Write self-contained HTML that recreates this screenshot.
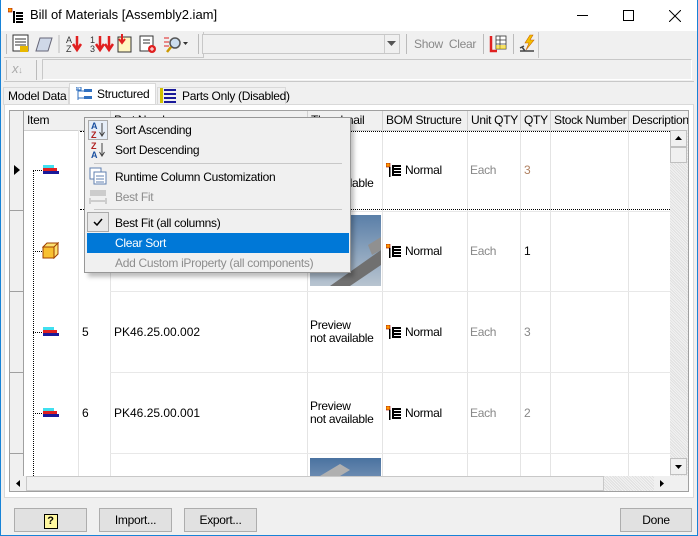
<!DOCTYPE html>
<html><head><meta charset="utf-8"><style>
*{box-sizing:border-box;margin:0;padding:0}
body{width:698px;height:536px;background:#f0f0f0;font-family:"Liberation Sans",sans-serif;font-size:12px;letter-spacing:-0.3px;color:#000;position:relative;overflow:hidden}
.a{position:absolute}
.win{left:0;top:0;width:698px;height:536px;border:1px solid #1883d7;border-top:none}
.t{white-space:nowrap}
.vl{position:absolute;top:130px;width:1px;height:346px;background:#e4e4e4}
.hl{position:absolute;left:110px;width:560px;height:1px;background:#e8e8e8}
.btn{position:absolute;top:508px;height:24px;background:#e1e1e1;border:1px solid #adadad;text-align:center;line-height:22px}
.mi{position:absolute;left:115px;white-space:nowrap}
.hd{position:absolute;top:111px;height:19px;border-right:1px solid #d0d0d0;padding-left:3px;line-height:19px;white-space:nowrap;overflow:hidden;background:#f0f0f0}
.bom{position:absolute;left:386px;width:16px;height:14px}
</style></head><body>
<div class="a" style="left:0;top:0;width:698px;height:31px;background:#fff"></div>
<div class="a win"></div>
<svg class="a" style="left:8px;top:8px" width="16" height="16"><rect x="0" y="0" width="4" height="4" fill="#f90" stroke="#900" stroke-width=".6"/><rect x="5" y="3" width="2" height="12" fill="#000"/><g fill="#000"><rect x="8" y="4" width="7" height="2"/><rect x="8" y="7" width="7" height="2"/><rect x="8" y="10" width="7" height="2"/><rect x="8" y="13" width="7" height="2"/></g></svg>
<div class="a t" style="left:30px;top:7px;font-size:13px;letter-spacing:0">Bill of Materials [Assembly2.iam]</div>
<div class="a" style="left:577px;top:15px;width:11px;height:1px;background:#000"></div>
<div class="a" style="left:623px;top:10px;width:11px;height:11px;border:1px solid #000"></div>
<svg class="a" style="left:669px;top:10px" width="12" height="12"><path d="M0 0L12 12M12 0L0 12" stroke="#000" stroke-width="1"/></svg>
<div class="a" style="left:4px;top:32px;width:200px;height:26px;border:1px solid #c8c8c8;border-top:none;border-left:none"></div>
<div class="a" style="left:6px;top:34px;width:1px;height:20px;background:#bbb"></div>
<svg class="a" style="left:12px;top:34px" width="180" height="20">
<rect x="1" y="1" width="15" height="16" fill="#fff" stroke="#333"/><path d="M3 5h11M3 8h11M3 11h11" stroke="#333"/><rect x="8" y="12" width="8" height="6" fill="#e8b800"/>
<path d="M28 4h12l-4 13H24z" fill="#cfd8e8" stroke="#667"/>
<line x1="47" y1="1" x2="47" y2="19" stroke="#bbb"/>
<text x="54" y="9" font-size="9" fill="#333" font-family="Liberation Sans">A</text><text x="54" y="18" font-size="9" fill="#333" font-family="Liberation Sans">Z</text><path d="M65 2v12M61 10l4 6 4-6" stroke="#e02020" stroke-width="2.5" fill="none"/>
<text x="78" y="9" font-size="9" fill="#333" font-family="Liberation Sans">1</text><text x="78" y="18" font-size="9" fill="#333" font-family="Liberation Sans">3</text><path d="M88 2v12M84 10l4 6 4-6M97 2v12M93 10l4 6 4-6" stroke="#e02020" stroke-width="2.5" fill="none"/>
<rect x="106" y="3" width="13" height="15" fill="#fff5c0" stroke="#333"/><path d="M110 0v8M107 5l3 4 3-4" stroke="#e02020" stroke-width="2" fill="none"/>
<rect x="128" y="2" width="13" height="15" fill="#fff" stroke="#333"/><path d="M131 6h7M131 9h7" stroke="#333"/><circle cx="140" cy="15" r="4" fill="#e02020"/><path d="M138 15h4M140 13v4" stroke="#fff"/>
<path d="M152 4h5M152 8h5M152 12h5" stroke="#e02020"/><circle cx="163" cy="9" r="5" fill="#cde" stroke="#555" stroke-width="1.5"/><path d="M159 13l-4 5" stroke="#c90" stroke-width="2.5"/><path d="M171 8h5l-2.5 3z" fill="#333"/>
</svg>
<div class="a" style="left:198px;top:34px;width:1px;height:20px;background:#bbb"></div>
<div class="a" style="left:202px;top:34px;width:198px;height:20px;background:#f0f0f0;border:1px solid #c8c8c8"></div>
<div class="a" style="left:384px;top:35px;width:15px;height:18px;border-left:1px solid #ccc"></div>
<svg class="a" style="left:387px;top:41px" width="9" height="5"><path d="M0 0h9L4.5 5z" fill="#555"/></svg>
<div class="a" style="left:406px;top:34px;width:1px;height:20px;background:#bbb"></div>
<div class="a t" style="left:414px;top:37px;color:#888;font-size:12px">Show&nbsp; Clear</div>
<div class="a" style="left:483px;top:34px;width:1px;height:20px;background:#bbb"></div>
<svg class="a" style="left:489px;top:35px" width="18" height="18"><path d="M2 1v15h6" stroke="#e02020" stroke-width="2.5" fill="none"/><rect x="7" y="1" width="10" height="13" fill="#fff" stroke="#333" stroke-width=".8"/><path d="M7 5h10M7 9h10M11 1v13" stroke="#333" stroke-width=".8"/><rect x="7" y="10" width="10" height="4" fill="#f4d000" opacity=".6"/></svg>
<div class="a" style="left:513px;top:34px;width:1px;height:20px;background:#bbb"></div>
<svg class="a" style="left:518px;top:34px" width="20" height="20"><path d="M12 1l-5 8h4l-3 7 8-10h-4l3-5z" fill="#f4c000" stroke="#c60" stroke-width=".6"/><path d="M2 17h14M4 13l3 4M2 14l4-2" stroke="#444" stroke-width="1.5"/></svg>
<div class="a" style="left:538px;top:32px;width:1px;height:26px;background:#c8c8c8"></div>
<div class="a" style="left:4px;top:58px;width:690px;height:24px;border-bottom:1px solid #c8c8c8"></div>
<div class="a" style="left:6px;top:60px;width:1px;height:20px;background:#bbb"></div>
<div class="a t" style="left:12px;top:61px;color:#aaa;font-style:italic;font-size:13px">x<span style="font-size:9px">↓</span></div>
<div class="a" style="left:36px;top:60px;width:1px;height:20px;background:#bbb"></div>
<div class="a" style="left:42px;top:59px;width:650px;height:21px;border:1px solid #c8c8c8;border-right-color:#fff;border-bottom-color:#fff"></div>
<div class="a t" style="left:3px;top:87px;height:18px;width:66px;border:1px solid #d9d9d9;border-bottom:none;padding-left:4px;line-height:17px">Model Data</div>
<div class="a t" style="left:69px;top:83px;height:23px;width:87px;background:#fff;border:1px solid #d9d9d9;border-bottom:none;padding-left:27px;line-height:20px">Structured</div>
<svg class="a" style="left:76px;top:87px" width="18" height="14"><path d="M2 1v12M2 4h6M2 11h6" stroke="#3070c0"/><rect x="0" y="0" width="5" height="3" fill="none" stroke="#3070c0"/><rect x="8" y="2" width="8" height="3" fill="#3070c0"/><rect x="8" y="9" width="8" height="3" fill="#3070c0"/></svg>
<div class="a t" style="left:157px;top:87px;height:18px;width:129px;border:1px solid #d9d9d9;border-bottom:none;padding-left:24px;line-height:17px">Parts Only (Disabled)</div>
<svg class="a" style="left:160px;top:88px" width="16" height="15"><rect x="0" y="0" width="3" height="15" fill="#d0c000"/><g fill="#1a1a9a"><rect x="4" y="1" width="12" height="2"/><rect x="4" y="5" width="12" height="2"/><rect x="4" y="9" width="12" height="2"/><rect x="4" y="13" width="12" height="2"/></g></svg>
<div class="a" style="left:4px;top:104px;width:690px;height:394px;border:1px solid #d9d9d9;background:#fff"></div>
<div class="a" style="left:9px;top:110px;width:680px;height:382px;background:#fff;border:1px solid #a0a0a0"></div>
<div class="a" style="left:10px;top:111px;width:14px;height:365px;background:#f0f0f0;border-right:1px solid #a0a0a0"></div>
<div class="a" style="left:10px;top:210px;width:14px;height:1px;background:#a0a0a0"></div>
<div class="a" style="left:10px;top:291px;width:14px;height:1px;background:#a0a0a0"></div>
<div class="a" style="left:10px;top:372px;width:14px;height:1px;background:#a0a0a0"></div>
<div class="a" style="left:10px;top:453px;width:14px;height:1px;background:#a0a0a0"></div>
<svg class="a" style="left:14px;top:165px" width="6" height="10"><path d="M0 0l6 5-6 5z" fill="#000"/></svg>
<div class="hd" style="left:24px;width:87px">Item</div>
<div class="hd" style="left:111px;width:197px">Part Number</div>
<div class="hd" style="left:308px;width:75px">Thumbnail</div>
<div class="hd" style="left:383px;width:85px">BOM Structure</div>
<div class="hd" style="left:468px;width:53px">Unit QTY</div>
<div class="hd" style="left:521px;width:30px">QTY</div>
<div class="hd" style="left:551px;width:78px">Stock Number</div>
<div class="hd" style="left:629px;width:59px;border-right:none">Description</div>
<div class="a" style="left:24px;top:130px;width:646px;height:1px;background:#d0d0d0"></div>
<div class="vl" style="left:78px"></div><div class="vl" style="left:110px"></div><div class="vl" style="left:307px"></div><div class="vl" style="left:382px"></div><div class="vl" style="left:467px"></div><div class="vl" style="left:520px"></div><div class="vl" style="left:550px"></div><div class="vl" style="left:628px"></div>
<div class="hl" style="top:291px"></div><div class="hl" style="top:372px"></div><div class="hl" style="top:453px"></div><div class="hl" style="top:211px"></div>
<div class="a" style="left:80px;top:131px;width:590px;height:0;border-top:1px dotted #000"></div>
<div class="a" style="left:80px;top:209px;width:590px;height:0;border-top:1px dotted #000"></div>
<div class="a" style="left:33px;top:170px;width:0;height:306px;border-left:1px dotted #000"></div>
<div class="a" style="left:33px;top:170px;width:9px;border-top:1px dotted #000"></div>
<div class="a" style="left:33px;top:251px;width:9px;border-top:1px dotted #000"></div>
<div class="a" style="left:33px;top:332px;width:9px;border-top:1px dotted #000"></div>
<div class="a" style="left:33px;top:413px;width:9px;border-top:1px dotted #000"></div>
<svg class="a" style="left:43px;top:165px" width="16" height="10"><rect x="0" y="0" width="11" height="3" fill="#40e0f0"/><rect x="0" y="3" width="14" height="3" fill="#e02020"/><rect x="0" y="6" width="16" height="3" fill="#1a1a9a"/></svg>
<svg class="a" style="left:43px;top:327px" width="16" height="10"><rect x="0" y="0" width="11" height="3" fill="#40e0f0"/><rect x="0" y="3" width="14" height="3" fill="#e02020"/><rect x="0" y="6" width="16" height="3" fill="#1a1a9a"/></svg>
<svg class="a" style="left:43px;top:408px" width="16" height="10"><rect x="0" y="0" width="11" height="3" fill="#40e0f0"/><rect x="0" y="3" width="14" height="3" fill="#e02020"/><rect x="0" y="6" width="16" height="3" fill="#1a1a9a"/></svg>
<svg class="a" style="left:42px;top:242px" width="17" height="17"><path d="M1 5h11v11H1z" fill="#f8c030" stroke="#a04000"/><path d="M1 5l4-4h11l-4 4zM12 5l4-4v11l-4 4z" fill="#fde070" stroke="#a04000"/></svg>
<div class="a t" style="left:82px;top:325px">5</div>
<div class="a t" style="left:114px;top:325px;letter-spacing:0">PK46.25.00.002</div>
<div class="a t" style="left:82px;top:406px">6</div>
<div class="a t" style="left:114px;top:406px;letter-spacing:0">PK46.25.00.001</div>
<div class="a t" style="left:310px;top:164px;line-height:13px">Preview<br>not available</div>
<div class="a t" style="left:310px;top:319px;line-height:13px">Preview<br>not available</div>
<div class="a t" style="left:310px;top:400px;line-height:13px">Preview<br>not available</div>
<div class="a" style="left:310px;top:215px;width:71px;height:71px;background:linear-gradient(180deg,#5a7fa8,#b8c4d0)"></div>
<svg class="a" style="left:310px;top:215px" width="71" height="71"><path d="M20 71L71 35V50L40 71z" fill="#707070"/><path d="M58 30L71 22V35L62 40z" fill="#909090"/></svg>
<div class="a" style="left:310px;top:458px;width:71px;height:18px;background:linear-gradient(180deg,#4a72a0,#6a8ab0)"></div>
<svg class="a" style="left:310px;top:458px" width="71" height="18"><path d="M10 18L30 6l10 6-10 6z" fill="#b0b0b0"/></svg>
<svg class="bom" style="top:163px" viewBox="0 0 16 14"><rect x="0" y="0" width="4" height="4" fill="#f90" stroke="#900" stroke-width=".6"/><rect x="3" y="4" width="1.5" height="10"/><rect x="6" y="2" width="9" height="2"/><rect x="6" y="5" width="9" height="2"/><rect x="6" y="8" width="9" height="2"/><rect x="6" y="11" width="9" height="2"/><rect x="6" y="2" width="2" height="11"/></svg>
<svg class="bom" style="top:244px" viewBox="0 0 16 14"><rect x="0" y="0" width="4" height="4" fill="#f90" stroke="#900" stroke-width=".6"/><rect x="3" y="4" width="1.5" height="10"/><rect x="6" y="2" width="9" height="2"/><rect x="6" y="5" width="9" height="2"/><rect x="6" y="8" width="9" height="2"/><rect x="6" y="11" width="9" height="2"/><rect x="6" y="2" width="2" height="11"/></svg>
<svg class="bom" style="top:325px" viewBox="0 0 16 14"><rect x="0" y="0" width="4" height="4" fill="#f90" stroke="#900" stroke-width=".6"/><rect x="3" y="4" width="1.5" height="10"/><rect x="6" y="2" width="9" height="2"/><rect x="6" y="5" width="9" height="2"/><rect x="6" y="8" width="9" height="2"/><rect x="6" y="11" width="9" height="2"/><rect x="6" y="2" width="2" height="11"/></svg>
<svg class="bom" style="top:406px" viewBox="0 0 16 14"><rect x="0" y="0" width="4" height="4" fill="#f90" stroke="#900" stroke-width=".6"/><rect x="3" y="4" width="1.5" height="10"/><rect x="6" y="2" width="9" height="2"/><rect x="6" y="5" width="9" height="2"/><rect x="6" y="8" width="9" height="2"/><rect x="6" y="11" width="9" height="2"/><rect x="6" y="2" width="2" height="11"/></svg>
<div class="a t" style="left:405px;top:163px">Normal</div><div class="a t" style="left:470px;top:163px;color:#888">Each</div><div class="a t" style="left:524px;top:163px;color:#b08060">3</div>
<div class="a t" style="left:405px;top:244px">Normal</div><div class="a t" style="left:470px;top:244px;color:#888">Each</div><div class="a t" style="left:524px;top:244px">1</div>
<div class="a t" style="left:405px;top:325px">Normal</div><div class="a t" style="left:470px;top:325px;color:#888">Each</div><div class="a t" style="left:524px;top:325px;color:#888">3</div>
<div class="a t" style="left:405px;top:406px">Normal</div><div class="a t" style="left:470px;top:406px;color:#888">Each</div><div class="a t" style="left:524px;top:406px;color:#888">2</div>
<div class="a" style="left:670px;top:130px;width:18px;height:346px;background:#eaeaea repeating-linear-gradient(45deg,#e0e0e0 0 1px,#f2f2f2 1px 2px)"></div>
<div class="a" style="left:670px;top:130px;width:17px;height:17px;background:#f0f0f0;border:1px solid #c0c0c0"></div>
<svg class="a" style="left:675px;top:136px" width="7" height="4"><path d="M0 4L3.5 0 7 4z" fill="#000"/></svg>
<div class="a" style="left:670px;top:147px;width:17px;height:16px;background:#f0f0f0;border:1px solid #c0c0c0"></div>
<div class="a" style="left:670px;top:458px;width:17px;height:17px;background:#f0f0f0;border:1px solid #c0c0c0"></div>
<svg class="a" style="left:675px;top:465px" width="7" height="4"><path d="M0 0h7L3.5 4z" fill="#000"/></svg>
<div class="a" style="left:10px;top:476px;width:678px;height:15px;background:#eaeaea repeating-linear-gradient(45deg,#e0e0e0 0 1px,#f2f2f2 1px 2px)"></div>
<div class="a" style="left:10px;top:476px;width:16px;height:15px;background:#f0f0f0"></div>
<svg class="a" style="left:16px;top:480px" width="4" height="7"><path d="M4 0v7L0 3.5z" fill="#000"/></svg>
<div class="a" style="left:26px;top:476px;width:578px;height:15px;background:#f0f0f0;border:1px solid #c8c8c8"></div>
<div class="a" style="left:654px;top:476px;width:16px;height:15px;background:#f0f0f0"></div>
<svg class="a" style="left:660px;top:480px" width="4" height="7"><path d="M0 0v7l4-3.5z" fill="#000"/></svg>
<div class="a" style="left:670px;top:476px;width:18px;height:15px;background:#f0f0f0"></div>
<div class="a" style="left:88px;top:121px;width:266px;height:156px;background:rgba(0,0,0,.25);filter:blur(2px)"></div>
<div class="a" style="left:84px;top:117px;width:267px;height:156px;background:#f0f0f0;border:1px solid #979797"></div>
<svg class="a" style="left:88px;top:120px" width="20" height="20"><rect x=".5" y=".5" width="19" height="19" fill="#e6eef8" stroke="#aaa"/><text x="3" y="9" font-size="9" font-weight="bold" fill="#1a50a0" font-family="Liberation Sans">A</text><text x="3" y="18" font-size="9" font-weight="bold" fill="#b02020" font-family="Liberation Sans">Z</text><path d="M14 3v12M11.5 12l2.5 4 2.5-4" stroke="#444" fill="none"/></svg>
<svg class="a" style="left:88px;top:140px" width="20" height="20"><text x="3" y="9" font-size="9" font-weight="bold" fill="#b02020" font-family="Liberation Sans">Z</text><text x="3" y="18" font-size="9" font-weight="bold" fill="#1a50a0" font-family="Liberation Sans">A</text><path d="M14 3v12M11.5 12l2.5 4 2.5-4" stroke="#444" fill="none"/></svg>
<div class="mi" style="top:123px">Sort Ascending</div>
<div class="mi" style="top:143px">Sort Descending</div>
<div class="a" style="left:94px;top:163px;width:248px;height:1px;background:#c8c8c8"></div>
<svg class="a" style="left:89px;top:167px" width="18" height="18"><rect x="1" y="1" width="11" height="11" fill="#fff" stroke="#6080b0"/><rect x="5" y="5" width="12" height="12" fill="#fff" stroke="#6080b0"/><path d="M7 9h8M7 12h8M7 15h8" stroke="#6080b0"/></svg>
<div class="mi" style="top:170px">Runtime Column Customization</div>
<svg class="a" style="left:89px;top:188px" width="18" height="18"><rect x="1" y="2" width="16" height="6" fill="#ccc"/><path d="M1 10v6M17 10v6M2 13h14" stroke="#aaa"/></svg>
<div class="mi" style="top:190px;color:#8d8d8d">Best Fit</div>
<div class="a" style="left:94px;top:209px;width:248px;height:1px;background:#c8c8c8"></div>
<div class="a" style="left:87px;top:212px;width:22px;height:20px;border:1px solid #aaa;background:#e8e8e8"></div>
<svg class="a" style="left:93px;top:218px" width="10" height="8"><path d="M1 4l3 3 5-6" stroke="#000" stroke-width="1.5" fill="none"/></svg>
<div class="mi" style="top:216px">Best Fit (all columns)</div>
<div class="a" style="left:87px;top:233px;width:262px;height:20px;background:#0078d7"></div>
<div class="mi" style="top:236px;color:#fff">Clear Sort</div>
<div class="mi" style="top:256px;color:#8d8d8d">Add Custom iProperty (all components)</div>
<div class="btn" style="left:14px;width:73px"><span style="display:inline-block;width:14px;height:15px;margin-top:3px;border:1px solid #000;background:#fff8a0;font-weight:bold;font-size:11px;line-height:13px">?</span></div>
<div class="btn" style="left:99px;width:73px">Import...</div>
<div class="btn" style="left:184px;width:73px">Export...</div>
<div class="btn" style="left:620px;width:72px">Done</div>
</body></html>
